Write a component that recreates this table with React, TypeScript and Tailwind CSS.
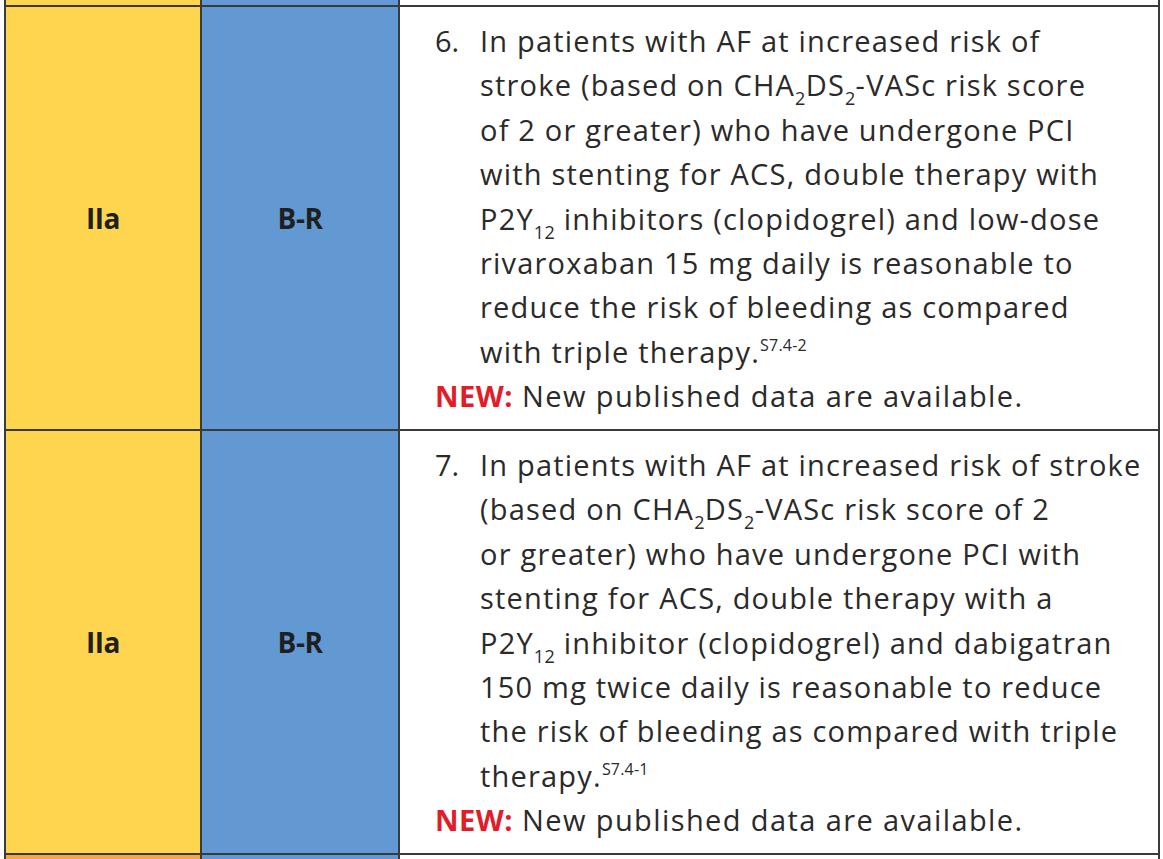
const FONT = { fontFamily: "'Open Sans', Lato, sans-serif" };

function Sub({ children }: { children: React.ReactNode }) {
  return <span className="relative top-[9px] text-[18px] leading-none tracking-[0.3px]">{children}</span>;
}

function Sup({ children }: { children: React.ReactNode }) {
  return <span className="relative -top-[12px] text-[16px] leading-none tracking-[0.2px]">{children}</span>;
}

interface Rec {
  num: string;
  lines: React.ReactNode[];
}

const RECS: Rec[] = [
  {
    num: "6.",
    lines: [
      "In patients with AF at increased risk of",
      <>stroke (based on CHA<Sub>2</Sub>DS<Sub>2</Sub>-VASc risk score</>,
      "of 2 or greater) who have undergone PCI",
      "with stenting for ACS, double therapy with",
      <>P2Y<Sub>12</Sub> inhibitors (clopidogrel) and low-dose</>,
      "rivaroxaban 15 mg daily is reasonable to",
      "reduce the risk of bleeding as compared",
      <>with triple therapy.<Sup>S7.4-2</Sup></>,
    ],
  },
  {
    num: "7.",
    lines: [
      "In patients with AF at increased risk of stroke",
      <>(based on CHA<Sub>2</Sub>DS<Sub>2</Sub>-VASc risk score of 2</>,
      "or greater) who have undergone PCI with",
      "stenting for ACS, double therapy with a",
      <>P2Y<Sub>12</Sub> inhibitor (clopidogrel) and dabigatran</>,
      "150 mg twice daily is reasonable to reduce",
      "the risk of bleeding as compared with triple",
      <>therapy.<Sup>S7.4-1</Sup></>,
    ],
  },
];

function Row({ rec }: { rec: Rec }) {
  return (
    <div className="grid grid-cols-[196px_198px_1fr] h-[424px] border-t-2 border-[#3a3a3a]">
      <div className="bg-[#fdd54f] border-r-2 border-[#3a3a3a] flex items-center justify-center">
        <span className="text-[28px] font-bold text-[#1f1f1f] tracking-[-0.5px]">IIa</span>
      </div>
      <div className="bg-[#6399d2] border-r-2 border-[#3a3a3a] flex items-center justify-center">
        <span className="text-[28px] font-bold text-[#1f1f1f] tracking-[-0.5px]">B-R</span>
      </div>
      <div className="bg-white pt-[12px] pl-[35px] text-[29px] leading-[44.4px] text-[#2a2a2a] tracking-[1.2px]">
        <div className="flex">
          <span className="w-[45px] shrink-0 tracking-[0px]">{rec.num}</span>
          <div>
            {rec.lines.map((l, i) => (
              <div key={i} className="whitespace-nowrap">{l}</div>
            ))}
          </div>
        </div>
        <div className="whitespace-nowrap tracking-[1.4px]">
          <span className="font-bold text-[#e11d2a] tracking-[0.5px]">NEW:</span> New published data are available.
        </div>
      </div>
    </div>
  );
}

export default function App() {
  return (
    <div className="w-[1163px] h-[859px] overflow-hidden bg-white" style={FONT}>
      <div className="ml-[4px] w-[1156px] border-l-2 border-r-2 border-[#3a3a3a]">
        {/* tail of the row above */}
        <div className="grid grid-cols-[196px_198px_1fr] h-[5px]">
          <div className="bg-[#fdd54f] border-r-2 border-[#3a3a3a]" />
          <div className="bg-[#6399d2] border-r-2 border-[#3a3a3a]" />
          <div className="bg-white" />
        </div>
        {RECS.map((r) => (
          <Row key={r.num} rec={r} />
        ))}
        {/* start of the next row */}
        <div className="grid grid-cols-[196px_198px_1fr] h-[10px] border-t-2 border-[#3a3a3a]">
          <div className="bg-[#f6a64a] border-r-2 border-[#3a3a3a]" />
          <div className="bg-[#6399d2] border-r-2 border-[#3a3a3a]" />
          <div className="bg-white" />
        </div>
      </div>
    </div>
  );
}
